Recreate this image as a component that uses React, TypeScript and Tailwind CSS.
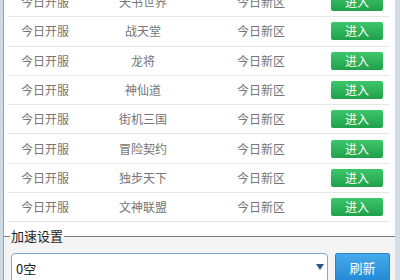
import React from "react";

const games = ["天书世界", "战天堂", "龙将", "神仙道", "街机三国", "冒险契约", "独步天下", "文神联盟"];

const font = { fontFamily: '"Noto Sans CJK SC", "Noto Sans", sans-serif' };

const Row = ({ name }: { name: string }) => (
    <div className="flex items-center h-[29.3px] mx-[3px] border-b border-[#e6e6e6] text-[12px] text-[#757575]">
        <div className="w-[88px] pl-[14px]">今日开服</div>
        <div className="w-[96px] text-center">{name}</div>
        <div className="w-[140px] text-center">今日新区</div>
        <button className="w-[52px] h-[18px] rounded-[2px] bg-gradient-to-b from-[#3cc66a] to-[#1fa14c] text-white text-[12px] leading-[18px]">
            进入
        </button>
    </div>
);

export default function App() {
    return (
        <div style={font} className="w-[400px] h-[280px] overflow-hidden flex bg-[#d3dde8]">
            <div className="w-[3px] shrink-0 bg-[#cfd9e4]" />
            <div className="flex flex-col w-[392px] shrink-0 border-l border-[#9aa3ad]">
                <div className="bg-white border-r-[3px] border-white -mt-[12px]">
                    {games.map((g) => (
                        <Row key={g} name={g} />
                    ))}
                    <div className="h-[14px]" />
                </div>
                <div className="flex-1 bg-[#f4f4f4] relative">
                    <div className="flex items-center -mt-[7px]">
                        <div className="w-[6px] border-t border-[#7c7c7c]" />
                        <span className="px-[1px] text-[13px] leading-[14px] text-[#1e1e1e]">加速设置</span>
                        <div className="flex-1 border-t border-[#7c7c7c]" />
                    </div>
                    <div className="flex gap-[7px] mt-[10px] pl-[7px]">
                        <div className="w-[317px] h-[32px] rounded-[4px] border border-[#7fa9d6] bg-white flex items-start pt-[5px] pl-[4px] relative">
                            <span className="text-[13px] text-[#222]">0空</span>
                            <span className="absolute left-[304px] top-[10px] w-0 h-0 border-l-[4px] border-r-[4px] border-t-[6px] border-l-transparent border-r-transparent border-t-[#2d5482]" />
                        </div>
                        <button className="w-[55px] h-[32px] rounded-[2px] border border-[#2a82c9] bg-gradient-to-b from-[#45aaea] to-[#1f86d2] text-white text-[13px] flex items-start justify-center pt-[4px]">
                            刷新
                        </button>
                    </div>
                </div>
            </div>
            <div className="w-[5px] shrink-0 bg-[#d3dde8]" />
        </div>
    );
}
